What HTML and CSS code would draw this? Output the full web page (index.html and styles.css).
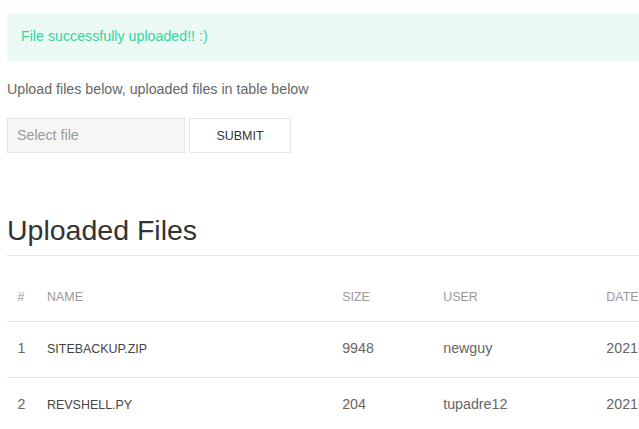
FILE: index.html
```html
<!DOCTYPE html>
<html lang="en">
<head>
<meta charset="utf-8">
<title>Uploaded Files</title>
<link rel="stylesheet" href="styles.css">
</head>
<body>
<div class="page">
  <div class="alert">File successfully uploaded!! :)</div>
  <p class="lead">Upload files below, uploaded files in table below</p>
  <form class="upload">
    <div class="file-input">Select file</div>
    <button type="button" class="btn">Submit</button>
  </form>
  <h2 class="heading">Uploaded Files</h2>
  <table class="files">
    <colgroup>
      <col class="c-num">
      <col class="c-name">
      <col class="c-size">
      <col class="c-user">
      <col class="c-date">
    </colgroup>
    <thead>
      <tr><th>#</th><th>Name</th><th>Size</th><th>User</th><th>Date</th></tr>
    </thead>
    <tbody>
      <tr><td>1</td><td class="name">sitebackup.zip</td><td>9948</td><td>newguy</td><td>2021-03-14</td></tr>
      <tr><td>2</td><td class="name">revshell.py</td><td>204</td><td>tupadre12</td><td>2021-03-14</td></tr>
    </tbody>
  </table>
</div>
</body>
</html>
```

FILE: styles.css
```css
html, body {
  margin: 0;
  padding: 0;
  overflow: hidden;
  background: #fff;
}
body {
  font-family: "Liberation Sans", Arial, sans-serif;
  font-size: 14.24px;
  line-height: 1.5;
  color: #666;
}
.page {
  width: 720px;
  padding: 13px 0 0 7px;
}
.alert {
  background: #ebfaf5;
  color: #3ad29f;
  padding: 13.4px 26px 13.4px 14px;
  line-height: 21.3px;
}
.lead {
  margin: 17.8px 0 17.8px;
  line-height: 21.3px;
}
.upload {
  display: flex;
  gap: 4px;
  margin: 0;
}
.file-input {
  box-sizing: border-box;
  width: 178px;
  height: 35.5px;
  padding: 0 9px;
  line-height: 33.5px;
  background: #f6f6f6;
  border: 1px solid #e5e5e5;
  color: #999;
}
.btn {
  box-sizing: border-box;
  width: 102px;
  height: 35.5px;
  padding: 0;
  background: #fff;
  border: 1px solid #e5e5e5;
  font-family: inherit;
  font-size: 12.46px;
  text-transform: uppercase;
  color: #333;
}
.heading {
  margin: 58.5px 0 0;
  padding-bottom: 5.5px;
  border-bottom: 1px solid #e5e5e5;
  font-size: 28.5px;
  font-weight: 400;
  line-height: 1.3;
  color: #333;
}
.files {
  margin-top: 18.5px;
  border-collapse: collapse;
  table-layout: fixed;
  width: 789px;
}
.c-num { width: 29.5px; }
.c-name { width: 295px; }
.c-size { width: 101px; }
.c-user { width: 163px; }
.c-date { width: 200px; }
.files th {
  padding: 14px 10.5px 14.5px;
  text-align: left;
  font-size: 12.46px;
  font-weight: 400;
  line-height: 18px;
  text-transform: uppercase;
  color: #999;
  white-space: nowrap;
}
.files td {
  padding: 16px 10.5px 17px;
  line-height: 21px;
  white-space: nowrap;
  vertical-align: baseline;
}
.files tbody tr {
  border-top: 1px solid #e5e5e5;
}
.files td.name {
  font-size: 12.46px;
  text-transform: uppercase;
  color: #444;
}
```
